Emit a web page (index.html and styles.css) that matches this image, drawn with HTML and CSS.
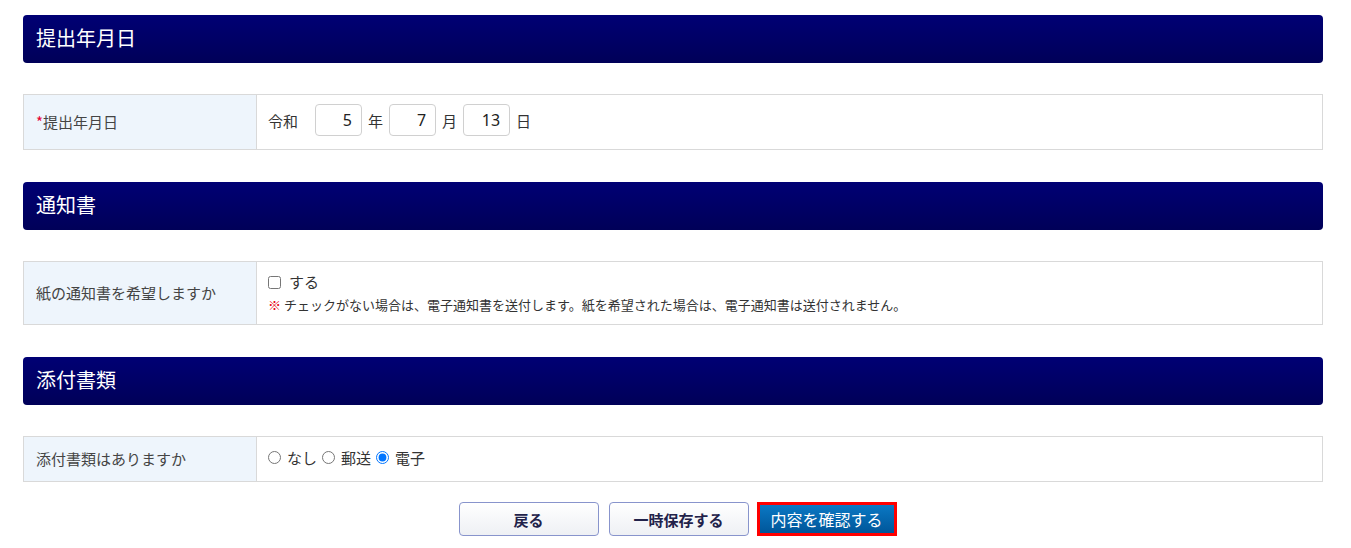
FILE: index.html
```html
<!DOCTYPE html>
<html lang="ja">
<head>
<meta charset="utf-8">
<link rel="stylesheet" href="styles.css">
</head>
<body>
<div class="page">
  <section class="sec sec-first">
    <h2 class="sec-head">提出年月日</h2>
    <table class="form">
      <tr class="row-date">
        <th class="label"><span class="req">*</span>提出年月日</th>
        <td class="field">
          <div class="date">
            <span class="era">令和</span>
            <input class="num" type="text" value="5"><span class="unit">年</span>
            <input class="num" type="text" value="7"><span class="unit">月</span>
            <input class="num" type="text" value="13"><span class="unit">日</span>
          </div>
        </td>
      </tr>
    </table>
  </section>

  <section class="sec">
    <h2 class="sec-head">通知書</h2>
    <table class="form">
      <tr class="row-notice">
        <th class="label">紙の通知書を希望しますか</th>
        <td class="field">
          <label class="check"><input type="checkbox"> する</label>
          <p class="note"><span class="mark">※</span> チェックがない場合は、電子通知書を送付します。紙を希望された場合は、電子通知書は送付されません。</p>
        </td>
      </tr>
    </table>
  </section>

  <section class="sec">
    <h2 class="sec-head">添付書類</h2>
    <table class="form">
      <tr class="row-attach">
        <th class="label">添付書類はありますか</th>
        <td class="field">
          <div class="radios">
            <label class="radio"><input type="radio" name="att">なし</label>
            <label class="radio"><input type="radio" name="att">郵送</label>
            <label class="radio"><input type="radio" name="att" checked>電子</label>
          </div>
        </td>
      </tr>
    </table>
  </section>

  <div class="actions">
    <button class="btn btn-sub">戻る</button>
    <button class="btn btn-sub">一時保存する</button>
    <button class="btn btn-main">内容を確認する</button>
  </div>
</div>
</body>
</html>
```

FILE: styles.css
```css
* { box-sizing: border-box; }
html, body { margin: 0; padding: 0; background: #fff; }
body {
  font-family: "Noto Sans CJK JP", "Noto Sans", sans-serif;
  color: #333;
  font-size: 15px;
}
.page {
  width: 1300px;
  margin-left: 23px;
  padding-top: 15px;
}
.sec { margin-bottom: 0; }
.sec + .sec { margin-top: 32px; }
.sec-head {
  margin: 0 0 31px;
  height: 48px;
  line-height: 46px;
  padding-left: 13px;
  font-size: 20px;
  font-weight: normal;
  color: #fff;
  border-radius: 4px;
  background: linear-gradient(#000074, #000058);
}
.form {
  width: 100%;
  border-collapse: collapse;
}
.form th, .form td {
  border: 1px solid #d9d9d9;
}
.label {
  width: 233px;
  background: #eef5fc;
  text-align: left;
  font-weight: normal;
  color: #444;
  padding: 0 12px 2px;
  font-size: 15px;
}
.req { color: #e60033; }
.field { padding: 0 11px; }
.row-date { height: 55px; }
.row-notice { height: 63px; }
.row-attach { height: 45px; }
.date {
  display: flex;
  align-items: center;
  gap: 6px;
  margin-top: -4px;
}
.era { margin-right: 11px; }
.num {
  width: 47px;
  height: 32px;
  border: 1px solid #d0d0d0;
  border-radius: 4px;
  text-align: right;
  padding: 0 9px;
  font-family: "Noto Sans", sans-serif;
  font-size: 16px;
  color: #222;
  margin: 0;
}
.check {
  display: flex;
  align-items: center;
  gap: 8px;
  line-height: 20px;
  margin-top: 0;
}
.check input { margin: 0; width: 13px; height: 13px; }
.note {
  margin: 3px 0 0;
  font-size: 13px;
  color: #333;
}
.mark { color: #e60012; font-weight: bold; }
.radios { display: flex; align-items: center; gap: 5px; margin-top: -3px; }
.radio { display: flex; align-items: center; gap: 6px; }
.radio input { margin: 0; width: 13px; height: 13px; }
.actions {
  display: flex;
  justify-content: center;
  gap: 10px;
  margin-top: 20px;
  padding-left: 9px;
}
.btn {
  width: 140px;
  height: 34px;
  font-family: "Noto Sans CJK JP", sans-serif;
  font-size: 15px;
  cursor: pointer;
  padding: 0;
}
.btn-sub {
  border: 1px solid #8894cc;
  border-radius: 4px;
  background: linear-gradient(#ffffff, #eef0f4);
  color: #22224a;
  font-weight: bold;
}
.btn-main {
  border: 3px solid #f00;
  background: linear-gradient(#0a78c4, #00569a);
  color: #fff;
  font-size: 16px;
  margin-left: -2px;
}
```
